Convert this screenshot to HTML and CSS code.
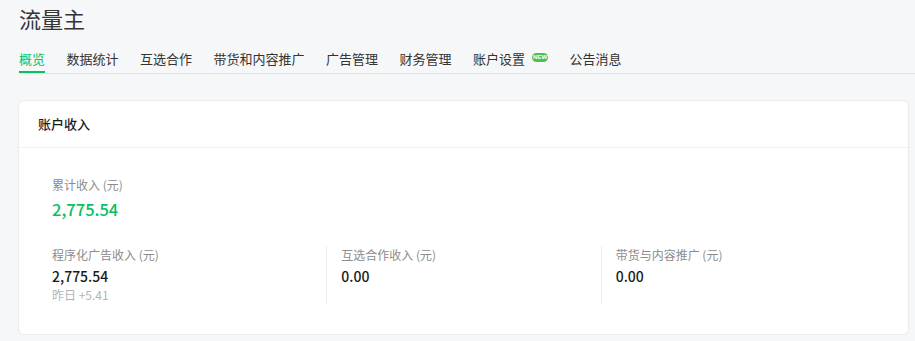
FILE: index.html
```html
<!DOCTYPE html>
<html lang="zh-CN">
<head>
  <meta charset="UTF-8" />
  <title>流量主</title>
  <link rel="stylesheet" href="styles.css">
</head>
<body>
  <div class="page">
    <h1 class="title">流量主</h1>

    <nav class="tabs">
      <a class="tab active">概览</a>
      <a class="tab">数据统计</a>
      <a class="tab">互选合作</a>
      <a class="tab">带货和内容推广</a>
      <a class="tab">广告管理</a>
      <a class="tab">财务管理</a>
      <a class="tab">账户设置<span class="badge">NEW</span></a>
      <a class="tab">公告消息</a>
    </nav>

    <section class="card">
      <div class="card-header">账户收入</div>
      <div class="card-body">
        <div class="total">
          <div class="label">累计收入 (元)</div>
          <div class="total-value">2,775.54</div>
        </div>

        <div class="stats">
          <div class="stat">
            <div class="label">程序化广告收入 (元)</div>
            <div class="value">2,775.54</div>
            <div class="sub">昨日 +5.41</div>
          </div>
          <div class="stat">
            <div class="label">互选合作收入 (元)</div>
            <div class="value">0.00</div>
          </div>
          <div class="stat">
            <div class="label">带货与内容推广 (元)</div>
            <div class="value">0.00</div>
          </div>
        </div>
      </div>
    </section>
  </div>
</body>
</html>
```

FILE: styles.css
```css
:root {
  --bg: #f6f7f9;
  --text: #333;
  --muted: #8c8c8c;
  --faint: #b5b5b5;
  --green: #07c160;
  --line: #e5e5e5;
}

body {
  margin: 0;
  background-color: var(--bg);
  color: var(--text);
  font-family: "Noto Sans CJK SC", "Liberation Sans", sans-serif;
}

.page {
  padding-left: 19px;
}

.title {
  margin: 0;
  font-size: 22px;
  font-weight: 400;
  line-height: 36px;
  color: #353535;
}

/* Top navigation tabs */
.tabs {
  display: flex;
  gap: 21.5px;
  border-bottom: 1px solid var(--line);
}

.tab {
  display: flex;
  align-items: center;
  padding-top: 13px;
  padding-bottom: 2px;
  border-bottom: 2px solid transparent;
  font-size: 13px;
  line-height: 20px;
  color: var(--text);
  cursor: pointer;
}
.tab.active {
  color: var(--green);
  border-bottom-color: var(--green);
}

.badge {
  margin-left: 7px;
  margin-top: -3px;
  width: 16px;
  height: 9px;
  border-radius: 5px;
  background-color: #4cbf58;
  color: #fff;
  font-size: 6px;
  font-weight: 700;
  line-height: 9px;
  text-align: center;
  font-family: "Liberation Sans", sans-serif;
}

/* Income card */
.card {
  margin: 26px 6px 0 -1px;
  background-color: #fff;
  border: 1px solid #ececec;
  border-radius: 6px;
  box-shadow: 0 1px 2px rgba(0, 0, 0, 0.03);
}

.card-header {
  height: 46px;
  line-height: 46px;
  padding: 0 19px;
  border-bottom: 1px solid #f0f0f0;
  font-size: 13px;
  font-weight: 500;
  color: #1a1a1a;
}

.card-body {
  padding: 28px 33px 30px;
}

.label {
  font-size: 12px;
  line-height: 18px;
  color: var(--muted);
}

.total-value {
  margin-top: 3px;
  font-size: 16.5px;
  font-weight: 500;
  line-height: 24px;
  color: var(--green);
}

.stats {
  display: grid;
  grid-template-columns: repeat(3, 1fr);
  margin-top: 25px;
}

.stat {
  min-height: 56px;
}
.stat + .stat {
  border-left: 1px solid #ededed;
  padding-left: 14px;
}

.value {
  margin-top: 2px;
  font-size: 14px;
  font-weight: 500;
  line-height: 20px;
  color: #1a1a1a;
}

.sub {
  font-size: 12px;
  line-height: 18px;
  color: var(--faint);
}
```
